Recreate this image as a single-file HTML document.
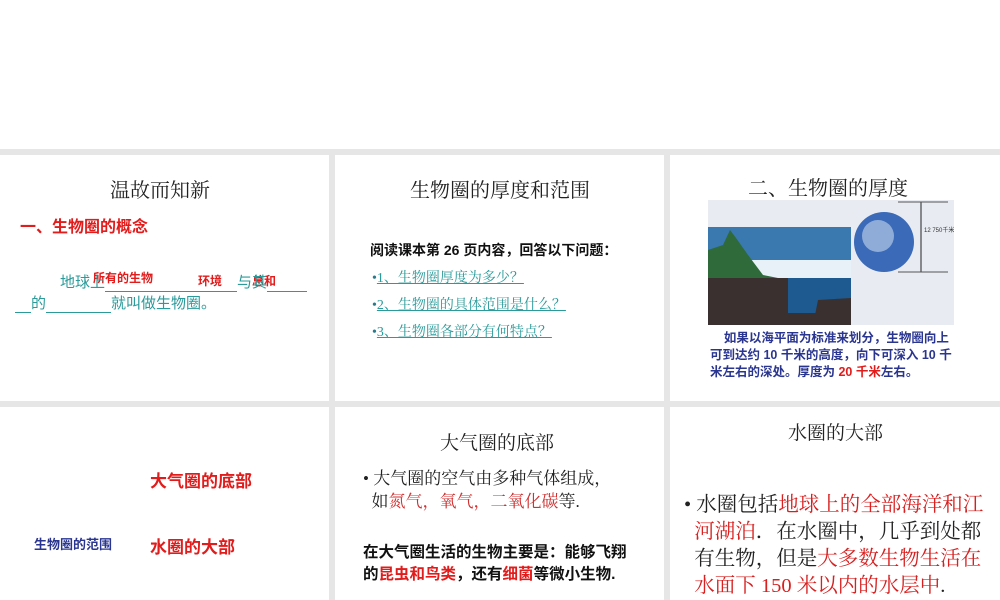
<!DOCTYPE html>
<html><head><meta charset="utf-8"><style>
body{margin:0;width:1000px;height:600px;position:relative;background:#fff;overflow:hidden;font-family:"Liberation Sans","Noto Sans CJK SC",sans-serif}
.band{position:absolute;left:0;top:149px;width:1000px;height:451px;background:#e6e6e6}
.p{position:absolute;background:#fff;overflow:hidden}
.a{position:absolute;white-space:nowrap}
.serif{font-family:"Liberation Serif","Noto Serif CJK SC",serif}
.t{font-size:20px;color:#222}
.red{color:#e21b1b}
.teal{color:#2a9a9a}
.b{font-weight:bold}
</style></head><body>
<div class="band"></div>

<div class="p" style="left:0;top:155px;width:329px;height:246px">
 <div class="a t serif" style="left:110px;top:19px">温故而知新</div>
 <div class="a red b" style="left:20px;top:58px;font-size:16px">一、生物圈的概念</div>
 <div class="a red b" style="left:93px;top:114px;font-size:12px">所有的生物</div>
 <div class="a red b" style="left:198px;top:117px;font-size:12px">环境</div>
 <div class="a red b" style="left:252px;top:117px;font-size:12px">总和</div>
 <div class="a teal" style="left:60px;top:116px;font-size:15px">地球上<span style="display:inline-block;width:132px;border-bottom:1px solid #2a9a9a">&nbsp;</span>与其<span style="display:inline-block;width:40px;border-bottom:1px solid #2a9a9a">&nbsp;</span></div>
 <div class="a teal" style="left:15px;top:137px;font-size:15px"><span style="display:inline-block;width:16px;border-bottom:1px solid #2a9a9a">&nbsp;</span>的<span style="display:inline-block;width:65px;border-bottom:1px solid #2a9a9a">&nbsp;</span>就叫做生物圈。</div>
</div>

<div class="p" style="left:335px;top:155px;width:329px;height:246px">
 <div class="a t serif" style="left:75px;top:19px">生物圈的厚度和范围</div>
 <div class="a b" style="left:35px;top:85px;font-size:14px;color:#111">阅读课本第 26 页内容，回答以下问题：</div>
 <div class="a serif" style="left:37px;top:112px;font-size:14px;color:#2a9a9a"><span style="color:#2a7a8a">•</span><u>1、生物圈厚度为多少？</u></div>
 <div class="a serif" style="left:37px;top:139px;font-size:14px;color:#2a9a9a"><span style="color:#2a7a8a">•</span><u>2、生物圈的具体范围是什么？</u></div>
 <div class="a serif" style="left:37px;top:166px;font-size:14px;color:#2a9a9a"><span style="color:#2a7a8a">•</span><u>3、生物圈各部分有何特点？</u></div>
</div>

<div class="p" style="left:670px;top:155px;width:330px;height:246px">
 <div class="a t serif" style="left:78px;top:17px">二、生物圈的厚度</div>
 <svg class="a" style="left:38px;top:45px" width="246" height="125">
  <rect width="246" height="125" fill="#e8ecf2"/>
  <rect x="0" y="27" width="143" height="98" fill="#2a5a8a"/>
  <rect x="0" y="27" width="143" height="40" fill="#3a78b0"/>
  <rect x="0" y="60" width="143" height="20" fill="#e8f0f8"/>
  <path d="M0,50 L15,45 L22,30 L28,38 L40,55 L55,75 L70,78 L0,80Z" fill="#2e6a3a"/>
  <path d="M0,78 L80,78 L115,88 L143,95 L143,125 L0,125Z" fill="#3a3030"/>
  <rect x="80" y="78" width="63" height="35" fill="#1e5a90"/>
  <path d="M105,125 L110,100 L143,98 L143,125Z" fill="#3a3030"/>
  <circle cx="176" cy="42" r="30" fill="#3a6ab8"/>
  <circle cx="170" cy="36" r="16" fill="#c8d8ee" opacity=".6"/>
  <line x1="213" y1="2" x2="213" y2="72" stroke="#222"/>
  <line x1="190" y1="2" x2="240" y2="2" stroke="#555"/>
  <line x1="190" y1="72" x2="240" y2="72" stroke="#555"/>
  <text x="216" y="32" font-size="6" fill="#333">12 750千米</text>
 </svg>
 <div class="a b" style="left:40px;top:175px;font-size:12.5px;color:#2a3590;line-height:17px">&nbsp;&nbsp;&nbsp;&nbsp;如果以海平面为标准来划分，生物圈向上<br>可到达约 10 千米的高度，向下可深入 10 千<br>米左右的深处。厚度为 <span class="red">20 千米</span>左右。</div>
</div>

<div class="p" style="left:0;top:407px;width:329px;height:193px">
 <div class="a red b" style="left:150px;top:60px;font-size:17px">大气圈的底部</div>
 <div class="a red b" style="left:150px;top:126px;font-size:17px">水圈的大部</div>
 <div class="a b" style="left:34px;top:127px;font-size:13px;color:#2a3590">生物圈的范围</div>
</div>

<div class="p" style="left:335px;top:407px;width:329px;height:193px">
 <div class="a t serif" style="left:105px;top:21px;font-size:19px">大气圈的底部</div>
 <div class="a serif" style="left:28px;top:60px;font-size:17px;line-height:23px;color:#222">• 大气圈的空气由多种气体组成，<br>&nbsp;&nbsp;如<span style="color:#d03030">氮气，氧气，二氧化碳</span>等.</div>
 <div class="a b" style="left:28px;top:135px;font-size:15.5px;line-height:22px;color:#111">在大气圈生活的生物主要是：能够飞翔<br>的<span class="red">昆虫和鸟类</span>，还有<span class="red">细菌</span>等微小生物.</div>
</div>

<div class="p" style="left:670px;top:407px;width:330px;height:193px">
 <div class="a t serif" style="left:118px;top:11px;font-size:19px">水圈的大部</div>
 <div class="a serif" style="left:14px;top:85px;font-size:20.5px;line-height:27px;color:#222">• 水圈包括<span style="color:#d82020">地球上的全部海洋和江</span><br>&nbsp;&nbsp;<span style="color:#d82020">河湖泊</span>．在水圈中，几乎到处都<br>&nbsp;&nbsp;有生物，但是<span style="color:#d82020">大多数生物生活在</span><br>&nbsp;&nbsp;<span style="color:#d82020">水面下 150 米以内的水层中</span>.</div>
</div>
</body></html>
